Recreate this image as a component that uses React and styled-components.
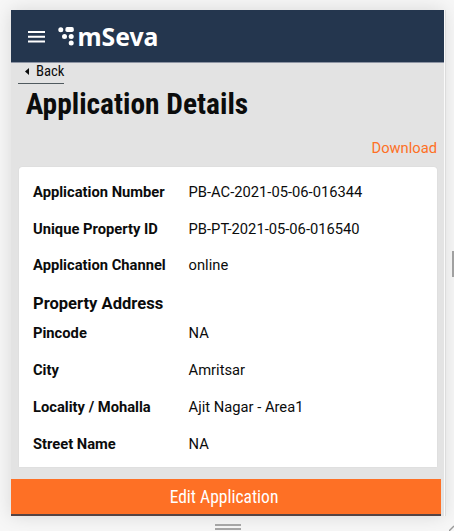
import React from "react";
import styled, { createGlobalStyle } from "styled-components";

const GlobalStyle = createGlobalStyle`
  * { box-sizing: border-box; }
  body {
    margin: 0;
    overflow: hidden;
    font-family: Roboto, "Liberation Sans", sans-serif;
    color: #0b0c0c;
  }
`;

const Viewport = styled.div`
  position: relative;
  width: 454px;
  height: 531px;
  padding: 10px 9px 0 11px;
  background: #f7f7f7;
  overflow: hidden;
`;

const Device = styled.main`
  display: flex;
  flex-direction: column;
  width: 433px;
  height: 506px;
  background: #e3e3e3;
  box-shadow: 1px 0 0 #fafafa, 2px 0 0 #dcdcdc, 0 0 18px rgba(0, 0, 0, 0.13);
`;

const TopBar = styled.header`
  display: flex;
  align-items: center;
  flex: none;
  height: 53px;
  padding-left: 17px;
  background: #24364e;
  border-bottom: 1px solid #8d94a3;
`;

const MenuIcon = styled.svg`
  width: 17px;
  height: 12px;
  margin-top: 1px;
`;

const Brand = styled.svg`
  width: 104px;
  height: 40px;
  margin-left: 12px;
`;

const BrandText = styled.text`
  font: 700 25px "Noto Sans", sans-serif;
  fill: #fff;
`;

const BackLink = styled.a`
  display: flex;
  align-items: center;
  flex: none;
  width: 46px;
  height: 21px;
  margin-left: 7.4px;
  padding: 0 0 3px 6.6px;
  border-bottom: 1px solid #505a5f;
  white-space: nowrap;
`;

const Arrow = styled.svg`
  width: 4px;
  height: 7px;
  margin-right: 7px;
  flex: none;
`;

const Condensed = styled.span`
  font-family: "Roboto Condensed", Roboto, sans-serif;
  font-stretch: 75%;
  font-size: ${(p) => p.$size}px;
  line-height: 1.2;
`;

const Title = styled.h1`
  flex: none;
  height: 40px;
  margin: 0 0 0 14.7px;
  font: 700 29.44px/40px "Roboto Condensed", Roboto, sans-serif;
  font-stretch: 75%;
  white-space: nowrap;
`;

const Download = styled.a`
  align-self: flex-end;
  height: 43px;
  margin-right: 7px;
  padding-top: 14px;
  color: #fe7025;
  font-size: 14.72px;
  line-height: 20px;
`;

const Card = styled.section`
  flex: none;
  width: 418px;
  height: 300px;
  margin-left: 7.6px;
  padding: 6.4px 14px 0 14.4px;
  background: #fff;
  border-radius: 3px 3px 0 0;
  box-shadow: 0 0 1px rgba(0, 0, 0, 0.16);
`;

const Row = styled.div`
  display: grid;
  grid-template-columns: 155.6px 1fr;
  align-items: center;
  height: 36.8px;
  font-size: 14.72px;
`;

const Label = styled.strong`
  font-weight: 700;
`;

const SectionTitle = styled.h2`
  height: 31px;
  margin: 0;
  font-size: 16.56px;
  font-weight: 700;
  line-height: 40.4px;
`;

const EditButton = styled.button`
  flex: none;
  width: 430px;
  height: 37px;
  margin: 12px 0 0;
  padding: 1px 4px 0 0;
  color: #fff;
  background: #fe7025;
  border: 0;
  border-bottom: 2px solid #554444;
`;

const SideGrip = styled.div`
  position: absolute;
  top: 251px;
  right: 0;
  width: 2px;
  height: 26px;
  background: #a0a0a0;
`;

const BottomGrip = styled.div`
  position: absolute;
  left: 215px;
  bottom: 1px;
  width: 26px;
  height: 6px;
  border: solid #a5a5a5;
  border-width: 2px 0;
`;

const CornerGrip = styled.svg`
  position: absolute;
  right: 0;
  bottom: 0;
  width: 5px;
  height: 6px;
`;

const summary = [
  ["Application Number", "PB-AC-2021-05-06-016344"],
  ["Unique Property ID", "PB-PT-2021-05-06-016540"],
  ["Application Channel", "online"],
];

const address = [
  ["Pincode", "NA"],
  ["City", "Amritsar"],
  ["Locality / Mohalla", "Ajit Nagar - Area1"],
  ["Street Name", "NA"],
];

const Rows = ({ items }) =>
  items.map(([label, value]) => (
    <Row key={label}>
      <Label>{label}</Label>
      <span>{value}</span>
    </Row>
  ));

export default function App() {
  return (
    <Viewport>
      <GlobalStyle />
      <Device>
        <TopBar>
          <MenuIcon viewBox="0 0 17 12" fill="#fff">
            <path d="M0 0h17v2H0zM0 4.8h17v2H0zM0 9.5h17v2H0z" />
          </MenuIcon>
          <Brand viewBox="0 0 104 40" fill="#fff">
            <circle cx="3.8" cy="13.7" r="2.5" />
            <rect x="8.4" y="11.1" width="8.4" height="5" rx="1.8" />
            <circle cx="7.5" cy="20.6" r="2.5" />
            <circle cx="14.2" cy="20.6" r="2.5" />
            <circle cx="14.2" cy="27.1" r="2.5" />
            <BrandText x="20.4" y="30" textLength="81" lengthAdjust="spacingAndGlyphs">mSeva</BrandText>
          </Brand>
        </TopBar>
        <BackLink>
          <Arrow viewBox="0 0 4 7"><path d="M4 0v7L0 3.5z" fill="#0b0c0c" /></Arrow>
          <Condensed $size={14.72}>Back</Condensed>
        </BackLink>
        <Title>Application Details</Title>
        <Download>Download</Download>
        <Card>
          <Rows items={summary} />
          <SectionTitle>Property Address</SectionTitle>
          <Rows items={address} />
        </Card>
        <EditButton><Condensed $size={17.5}>Edit Application</Condensed></EditButton>
      </Device>
      <SideGrip />
      <BottomGrip />
      <CornerGrip viewBox="0 0 5 6"><path d="M0 6L5 1" stroke="#999" strokeWidth="1.4" /></CornerGrip>
    </Viewport>
  );
}
